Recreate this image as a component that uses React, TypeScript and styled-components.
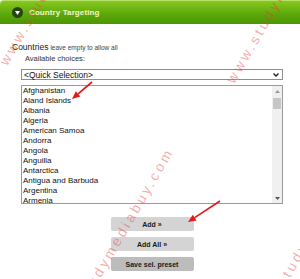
import styled, { createGlobalStyle } from "styled-components"

const GlobalStyle = createGlobalStyle`
  html, body {
    margin: 0;
    padding: 0;
    background: #fff;
  }
  body {
    font-family: "Liberation Sans", Arial, sans-serif;
  }
`

const COUNTRIES = [
  'Afghanistan',
  'Aland Islands',
  'Albania',
  'Algeria',
  'American Samoa',
  'Andorra',
  'Angola',
  'Anguilla',
  'Antarctica',
  'Antigua and Barbuda',
  'Argentina',
  'Armenia',
  'Aruba'
]

const Page = styled.div`
  position: relative;
  width: 300px;
  height: 279px;
  overflow: hidden;
  background: #fff;
`

const Header = styled.div`
  height: 23px;
  display: flex;
  align-items: center;
  gap: 6px;
  padding-left: 12px;
  border-radius: 4px 0 0 0;
  border-top: 1px solid #b6e06a;
  background: linear-gradient(#88c820, #5aa70a 60%, #4c9604);
`

const Toggle = styled.span`
  width: 11px;
  height: 11px;
  border-radius: 50%;
  background: #2b4414;
  display: flex;
  align-items: center;
  justify-content: center;
`

const HeaderTitle = styled.span`
  font-size: 8px;
  font-weight: bold;
  color: #f2f7c2;
  letter-spacing: 0.1px;
`

const Content = styled.div`
  padding: 18px 0 0 12px;
`

const TitleRow = styled.div`
  height: 10px;
  line-height: 10px;
  display: flex;
  align-items: baseline;
  gap: 2px;
`

const Title = styled.span`
  font-size: 8.5px;
  color: #222;
`

const Hint = styled.span`
  font-size: 6.5px;
  color: #444;
`

const Field = styled.div`
  padding-left: 9px;
  width: 262px;
  display: flex;
  flex-direction: column;
`

const FieldLabel = styled.div`
  margin-top: 2px;
  padding-left: 4px;
  font-size: 7.5px;
  line-height: 10px;
  color: #333;
`

const QuickSelect = styled.div`
  margin-top: 5px;
  height: 9px;
  border: 1px solid #8f8f8f;
  display: flex;
  align-items: center;
  justify-content: space-between;
  padding: 0 3px 0 2px;
  font-size: 8.5px;
  color: #111;
`

const ListBox = styled.div`
  margin-top: 5px;
  height: 117px;
  border: 1px solid #9a9a9a;
  display: flex;
  overflow: hidden;
`

const Items = styled.div`
  flex: 1;
  padding-left: 1px;
  overflow: hidden;
`

const Item = styled.div`
  font-size: 8px;
  line-height: 10px;
  height: 10px;
  color: #111;
  white-space: nowrap;
`

const ScrollBar = styled.div`
  width: 10px;
  background: #f0f0f0;
  display: flex;
  flex-direction: column;
  align-items: center;
`

const ScrollArrow = styled.div`
  height: 10px;
  display: flex;
  align-items: center;
  justify-content: center;
`

const ScrollThumb = styled.div`
  margin-top: 2px;
  width: 8px;
  height: 11px;
  background: #c6c6c6;
`

const ScrollFill = styled.div`
  flex: 1;
`

const Actions = styled.div`
  margin-top: 13px;
  display: flex;
  flex-direction: column;
  align-items: center;
  gap: 6px;
`

const ActionButton = styled.div<{ $dark?: boolean }>`
  width: 83px;
  height: 14px;
  border-radius: 2px;
  background: ${p => (p.$dark ? '#bcbcbc' : '#d4d4d4')};
  display: flex;
  align-items: center;
  justify-content: center;
  font-size: 7px;
  font-weight: bold;
  color: #1a1a1a;
`

const Overlay = styled.svg`
  position: absolute;
  left: 0;
  top: 0;
  pointer-events: none;
`

// diagonal site watermark drawn over the screenshot
const Watermark = styled.span<{ $x: number; $y: number }>`
  position: absolute;
  left: ${p => p.$x}px;
  top: ${p => p.$y}px;
  transform-origin: 0 0;
  transform: rotate(-60deg);
  font-size: 14px;
  line-height: 16px;
  letter-spacing: 3px;
  white-space: pre;
  color: rgba(232, 52, 52, 0.42);
  pointer-events: none;
`

const Arrow = ({ x1, y1, x2, y2 }: { x1: number, y1: number, x2: number, y2: number }) => {
  const a = Math.atan2(y2 - y1, x2 - x1)
  const len = 8
  const w = 3.5
  const bx = x2 - Math.cos(a) * len
  const by = y2 - Math.sin(a) * len
  const p1 = `${bx + Math.sin(a) * w},${by - Math.cos(a) * w}`
  const p2 = `${bx - Math.sin(a) * w},${by + Math.cos(a) * w}`
  return (
    <g>
      <line x1={x1} y1={y1} x2={bx} y2={by} stroke="#e01b1b" strokeWidth={1.7} />
      <polygon points={`${x2},${y2} ${p1} ${p2}`} fill="#e01b1b" />
    </g>
  )
}

const App = () => {
  return (
    <Page>
      <GlobalStyle />
      <Header>
        <Toggle>
          <svg width="5" height="4" viewBox="0 0 5 4">
            <polygon points="0,0 5,0 2.5,4" fill="#fff" />
          </svg>
        </Toggle>
        <HeaderTitle>Country Targeting</HeaderTitle>
      </Header>

      <Content>
        <TitleRow>
          <Title>Countries</Title>
          <Hint>leave empty to allow all</Hint>
        </TitleRow>
        <Field>
          <FieldLabel>Available choices:</FieldLabel>
          <QuickSelect>
            <span>&lt;Quick Selection&gt;</span>
            <svg width="6" height="4" viewBox="0 0 6 4">
              <polyline points="0.5,0.5 3,3 5.5,0.5" fill="none" stroke="#222" strokeWidth="1.4" />
            </svg>
          </QuickSelect>
          <ListBox>
            <Items>
              {COUNTRIES.map(c => <Item key={c}>{c}</Item>)}
            </Items>
            <ScrollBar>
              <ScrollArrow>
                <svg width="5" height="3" viewBox="0 0 5 3"><polygon points="0,3 5,3 2.5,0" fill="#9a9a9a" /></svg>
              </ScrollArrow>
              <ScrollThumb />
              <ScrollFill />
              <ScrollArrow>
                <svg width="5" height="3" viewBox="0 0 5 3"><polygon points="0,0 5,0 2.5,3" fill="#555" /></svg>
              </ScrollArrow>
            </ScrollBar>
          </ListBox>
          <Actions>
            <ActionButton>Add »</ActionButton>
            <ActionButton>Add All »</ActionButton>
            <ActionButton $dark>Save sel. preset</ActionButton>
          </Actions>
        </Field>
      </Content>

      <Watermark $x={-4} $y={60}>www.studymediabuy.com</Watermark>
      <Watermark $x={53} $y={335}>www.studymediabuy.com</Watermark>
      <Watermark $x={223} $y={78}>www.studymediabuy.com</Watermark>
      <Watermark $x={251} $y={320}>www.studymediabuy.com</Watermark>

      <Overlay width="300" height="279" viewBox="0 0 300 279">
        <Arrow x1={92} y1={82} x2={72} y2={99} />
        <Arrow x1={220} y1={201} x2={188} y2={222} />
      </Overlay>
    </Page>
  )
}

export default App
